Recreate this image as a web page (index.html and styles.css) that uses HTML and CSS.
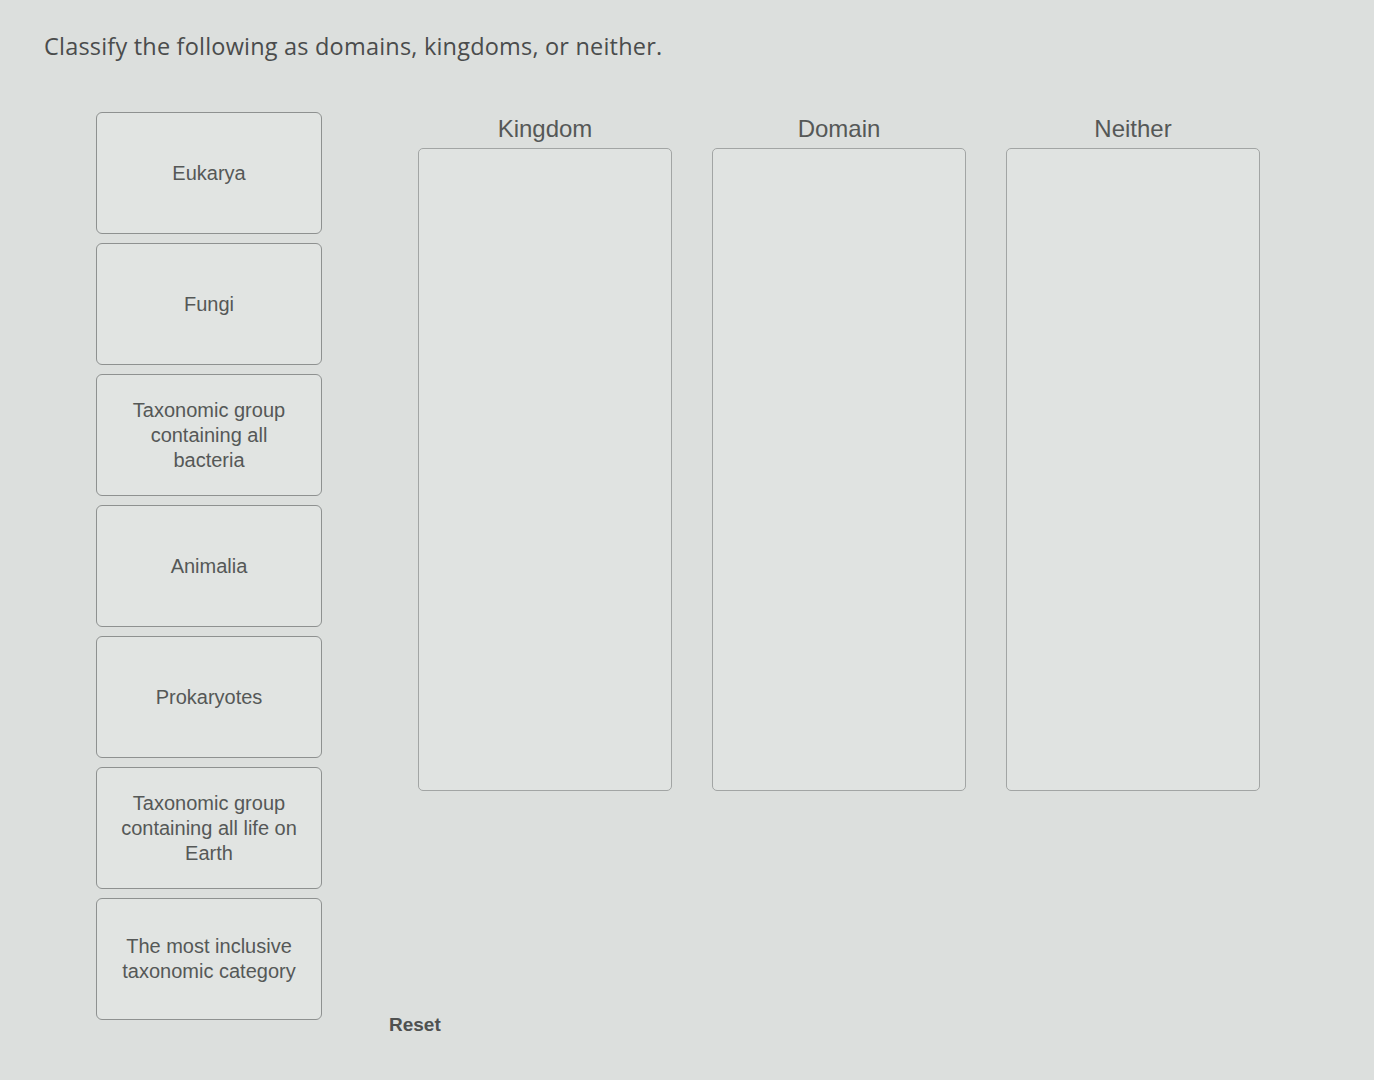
FILE: index.html
```html
<!DOCTYPE html>
<html>
<head>
<meta charset="utf-8">
<link rel="stylesheet" href="styles.css">
</head>
<body>
<div class="page">
  <h1 class="title">Classify the following as domains, kingdoms, or neither.</h1>
  <div class="main">
    <div class="cards">
      <div class="card">Eukarya</div>
      <div class="card">Fungi</div>
      <div class="card">Taxonomic group containing all bacteria</div>
      <div class="card">Animalia</div>
      <div class="card">Prokaryotes</div>
      <div class="card">Taxonomic group containing all life on Earth</div>
      <div class="card">The most inclusive taxonomic category</div>
    </div>
    <div class="right">
      <div class="bins">
        <div class="bin">
          <div class="bin-head">Kingdom</div>
          <div class="bin-box"></div>
        </div>
        <div class="bin">
          <div class="bin-head">Domain</div>
          <div class="bin-box"></div>
        </div>
        <div class="bin">
          <div class="bin-head">Neither</div>
          <div class="bin-box"></div>
        </div>
      </div>
      <div class="reset">Reset</div>
    </div>
  </div>
</div>
</body>
</html>
```
FILE: styles.css
```css
html, body {
  margin: 0;
  padding: 0;
  background: #dcdfdd;
  width: 1374px;
  height: 1080px;
  overflow: hidden;
}
.page {
  padding: 28px 0 0 44px;
  font-family: "Liberation Sans", Arial, sans-serif;
  color: #555;
}
.title {
  margin: 0;
  font-family: "Open Sans", "Liberation Sans", sans-serif;
  font-weight: 400;
  font-size: 23.5px;
  line-height: 36px;
  color: #4a4c4c;
  letter-spacing: 0.2px;
}
.main {
  display: flex;
  align-items: flex-start;
  margin-top: 48px;
}
.cards {
  display: flex;
  flex-direction: column;
  gap: 9px;
  margin-left: 52px;
  width: 226px;
}
.card {
  height: 122px;
  box-sizing: border-box;
  border: 1px solid #8e9190;
  border-radius: 6px;
  background: #e1e4e2;
  display: flex;
  align-items: center;
  justify-content: center;
  text-align: center;
  padding: 0 18px;
  font-size: 20px;
  line-height: 25px;
  color: #555857;
}
.right {
  display: flex;
  flex-direction: column;
  margin-left: 67px;
  width: 900px;
  height: 924px;
}
.bins {
  display: flex;
  gap: 40px;
  padding-left: 29px;
  margin-top: 2px;
}
.bin {
  width: 254px;
  display: flex;
  flex-direction: column;
}
.bin-head {
  text-align: center;
  font-size: 24px;
  line-height: 30px;
  height: 34px;
  color: #555857;
}
.bin-box {
  height: 643px;
  box-sizing: border-box;
  border: 1px solid #a2a5a4;
  border-radius: 5px;
  background: #e0e3e1;
}
.reset {
  margin-top: auto;
  font-weight: 700;
  font-size: 19px;
  line-height: 22px;
  color: #4f5150;
}
```
